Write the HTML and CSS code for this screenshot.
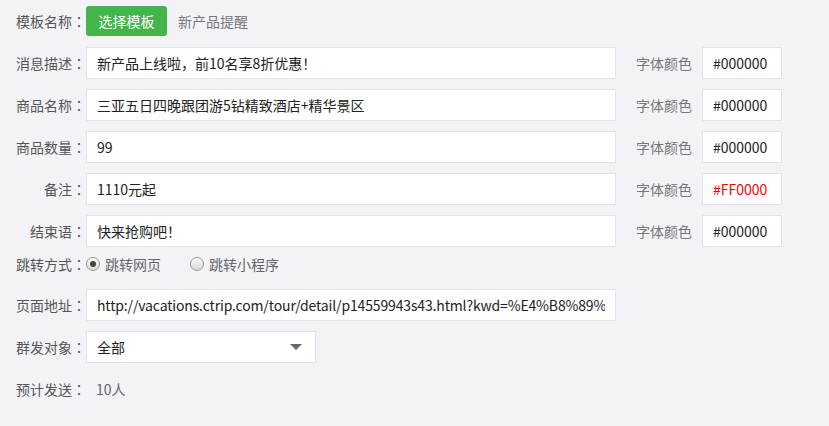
FILE: index.html
```html
<!DOCTYPE html>
<html lang="zh-CN">
<head>
    <meta charset="UTF-8">
    <title>群发消息</title>

    <link rel="stylesheet" href="styles.css">

</head>
<body>

<div class="panel">
    <div class="row row_top">
        <span class="label">模板名称</span>
        <button class="btn_green" type="button">选择模板</button>
        <span class="tpl_name">新产品提醒</span>
    </div>

    <div class="row">
        <span class="label">消息描述</span>
        <input class="field" type="text" value="新产品上线啦，前10名享8折优惠！">
        <span class="color_label">字体颜色</span>
        <input class="color_field" type="text" value="#000000">
    </div>

    <div class="row">
        <span class="label">商品名称</span>
        <input class="field" type="text" value="三亚五日四晚跟团游5钻精致酒店+精华景区">
        <span class="color_label">字体颜色</span>
        <input class="color_field" type="text" value="#000000">
    </div>

    <div class="row">
        <span class="label">商品数量</span>
        <input class="field" type="text" value="99">
        <span class="color_label">字体颜色</span>
        <input class="color_field" type="text" value="#000000">
    </div>

    <div class="row">
        <span class="label">备注</span>
        <input class="field" type="text" value="1110元起">
        <span class="color_label">字体颜色</span>
        <input class="color_field red" type="text" value="#FF0000">
    </div>

    <div class="row">
        <span class="label">结束语</span>
        <input class="field" type="text" value="快来抢购吧！">
        <span class="color_label">字体颜色</span>
        <input class="color_field" type="text" value="#000000">
    </div>

    <div class="row row_radio">
        <span class="label">跳转方式</span>
        <label class="radio"><span class="dot checked"></span>跳转网页</label>
        <label class="radio"><span class="dot"></span>跳转小程序</label>
    </div>

    <div class="row">
        <span class="label">页面地址</span>
        <input class="field url" type="text" value="http://vacations.ctrip.com/tour/detail/p14559943s43.html?kwd=%E4%B8%89%I">
    </div>

    <div class="row">
        <span class="label">群发对象</span>
        <div class="select">
            <span>全部</span>
            <span class="arrow"></span>
        </div>
    </div>

    <div class="row">
        <span class="label">预计发送</span>
        <span class="value">10人</span>
    </div>
</div>

</body>
</html>
```

FILE: styles.css
```css
body{
    margin: 0;
    background-color: #f3f3f7;
    font-family: "Noto Sans CJK SC", "Noto Sans", sans-serif;
    font-size: 14px;
    color: #555;
}

.panel{
    padding: 6px 16px;
}

.row{
    display: flex;
    align-items: center;
    height: 32px;
    margin-bottom: 10px;
}

.row_top{
    height: 30px;
    margin-bottom: 11px;
}

.row_radio{
    height: 14px;
    margin-bottom: 18px;
}

.label{
    width: 70px;
    text-align: right;
    white-space: nowrap;
    color: #555;
}

/* centered full-width colon */
.label::after{
    content: "：";
    font-family: "Noto Sans CJK JP", sans-serif;
    font-feature-settings: "locl" 0;
}

.btn_green{
    width: 81px;
    height: 30px;
    border: 0;
    border-radius: 3px;
    background-color: #44b549;
    color: #fff;
    font-family: inherit;
    font-size: 14px;
    padding: 0;
}

.tpl_name{
    margin-left: 11px;
    color: #777;
}

.field{
    box-sizing: border-box;
    width: 530px;
    height: 32px;
    border: 1px solid #e3e3e8;
    background-color: #fff;
    padding: 0 10px;
    font-family: inherit;
    font-size: 14px;
    color: #222;
    outline: none;
}

.url{
    letter-spacing: -0.15px;
}

.color_label{
    margin-left: 20px;
    width: 56px;
    color: #777;
}

.color_field{
    box-sizing: border-box;
    width: 80px;
    height: 32px;
    margin-left: 10px;
    border: 1px solid #e3e3e8;
    background-color: #fff;
    padding: 0 10px;
    font-family: inherit;
    font-size: 14px;
    color: #222;
    outline: none;
}

.red{
    color: #ff0000;
}

.radio{
    display: flex;
    align-items: center;
    color: #666;
    margin-right: 29px;
}

.dot{
    position: relative;
    box-sizing: border-box;
    width: 14px;
    height: 14px;
    margin-right: 5px;
    border: 1px solid #999;
    border-radius: 50%;
    background: linear-gradient(#f8f8f8, #d8d8d8);
}

.dot.checked::after{
    content: "";
    position: absolute;
    top: 3px;
    left: 3px;
    width: 6px;
    height: 6px;
    border-radius: 50%;
    background-color: #444;
}

.select{
    box-sizing: border-box;
    width: 230px;
    height: 32px;
    display: flex;
    align-items: center;
    justify-content: space-between;
    padding: 0 13px 0 10px;
    border: 1px solid #e3e3e8;
    background-color: #fff;
    color: #222;
}

.arrow{
    width: 0;
    height: 0;
    border-left: 6px solid transparent;
    border-right: 6px solid transparent;
    border-top: 6px solid #666;
}

.value{
    margin-left: 10px;
    color: #666;
}
```
